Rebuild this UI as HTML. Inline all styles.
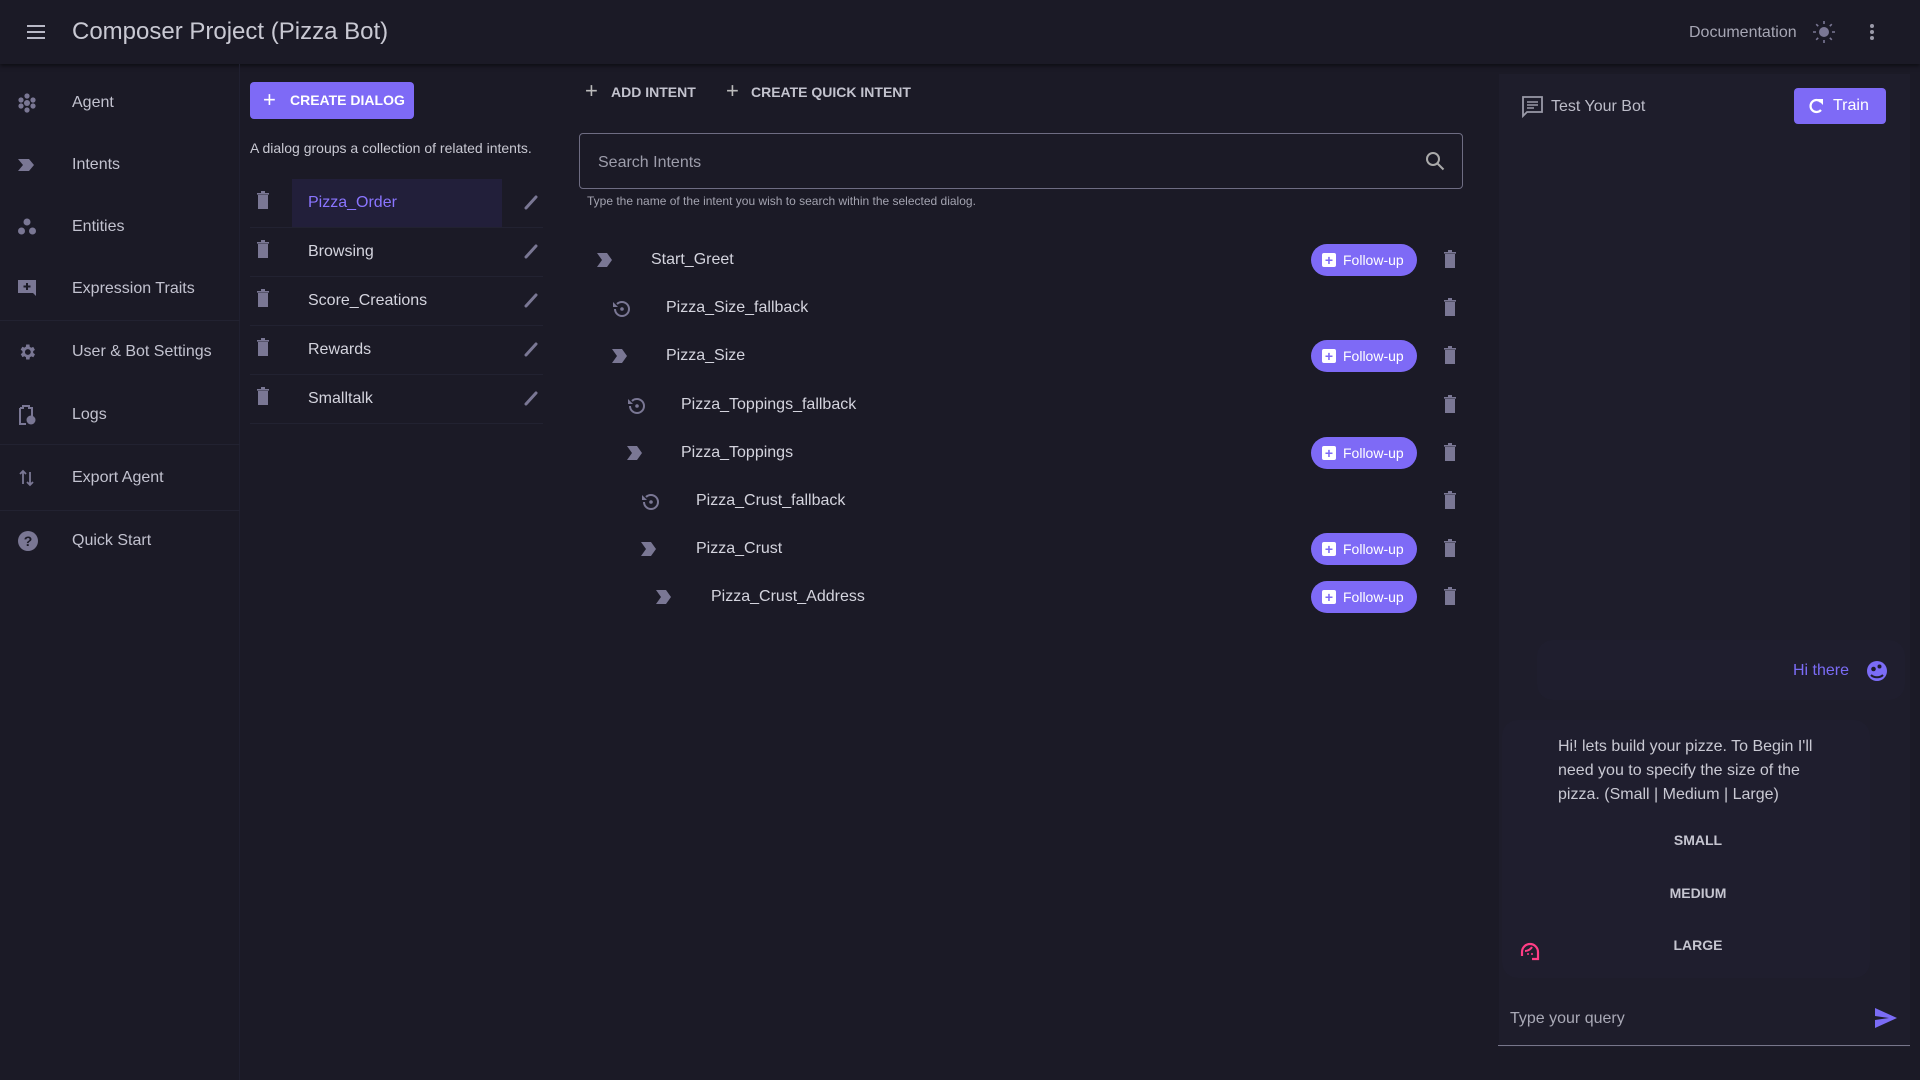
<!DOCTYPE html>
<html><head><meta charset="utf-8"><style>
*{box-sizing:border-box;margin:0;padding:0}
body{width:1920px;height:1080px;background:#1b1a26;font-family:"Liberation Sans",sans-serif;color:#cfcfd9;position:relative;overflow:hidden}
.a{position:absolute;white-space:nowrap}
.hdr{left:0;top:0;width:1920px;height:64px;background:#1b1a26;box-shadow:0 2px 4px rgba(0,0,0,.5)}
.side{left:0;top:64px;width:240px;height:1016px;border-right:1px solid #202030}
.ni{position:absolute;left:0;width:240px;height:62px}
.ni span{position:absolute;left:72px;top:50%;transform:translateY(-50%);font-size:16px;color:#c2c2cf;white-space:nowrap}
.ni svg{position:absolute;left:17px;top:50%;transform:translateY(-50%)}
.btn{background:#7e6af6;color:#fff;border-radius:4px;font-weight:bold;font-size:14px}
.dr{position:absolute;left:250px;width:293px;height:49px;border-bottom:1px solid #222231}
.dr span{position:absolute;left:58px;top:50%;transform:translateY(-50%);font-size:16px;color:#d4d4de}
.ir{position:absolute;left:580px;width:890px;height:40px}
.ir span{position:absolute;top:50%;transform:translateY(-50%);font-size:16px;color:#d4d4de}
.fu{position:absolute;left:731px;top:4px;width:106px;height:32px;border-radius:16px;background:#7e6af6;color:#fff;font-size:14px;line-height:32px;padding-left:32px}
.fu:before{content:"+";position:absolute;left:11px;top:9px;width:14px;height:14px;background:#fff;color:#7e6af6;border-radius:2px;font-size:14px;line-height:14px;text-align:center;font-weight:bold}
.mb{position:absolute;left:1519px;width:358px;text-align:center;font-weight:bold;font-size:14px;color:#c5c5d0}
</style></head><body>
<div class="a hdr">
 <svg class="a" style="left:24px;top:20px" width="24" height="24" viewBox="0 0 24 24"><path d="M3 6h18M3 12h18M3 18h18" stroke="#b8b8c6" stroke-width="2"/></svg>
 <div class="a" style="left:72px;top:18px;font-size:24px;color:#c9c9d3">Composer Project (Pizza Bot)</div>
 <div class="a" style="left:1689px;top:24px;font-size:16px;color:#a6a6b4">Documentation</div>
 <svg class="a" style="left:1812px;top:20px" width="24" height="24" viewBox="0 0 24 24"><circle cx="12" cy="12" r="5" fill="#7a7794"/><path d="M12 1v3M12 20v3M1 12h3M20 12h3M4.2 4.2l2 2M17.8 17.8l2 2M4.2 19.8l2-2M17.8 6.2l2-2" stroke="#7a7794" stroke-width="1.6"/></svg>
 <svg class="a" style="left:1860px;top:20px" width="24" height="24" viewBox="0 0 24 24"><circle cx="12" cy="6" r="2" fill="#9a9aa8"/><circle cx="12" cy="12" r="2" fill="#9a9aa8"/><circle cx="12" cy="18" r="2" fill="#9a9aa8"/></svg>
</div>
<div class="a side">
 <div class="ni" style="top:8px"><svg width="20" height="20" viewBox="0 0 20 20" fill="#7a7794"><circle cx="10" cy="10" r="3"/><circle cx="4" cy="7" r="2.6"/><circle cx="16" cy="7" r="2.6"/><circle cx="4" cy="13" r="2.6"/><circle cx="16" cy="13" r="2.6"/><circle cx="10" cy="3" r="2.6"/><circle cx="10" cy="17" r="2.6"/></svg><span>Agent</span></div>
 <div class="ni" style="top:70px"><svg width="20" height="20" viewBox="0 0 20 20"><path d="M1 4h11l5 6-5 6H1l5-6z" fill="#7a7794"/></svg><span>Intents</span></div>
 <div class="ni" style="top:132px"><svg width="20" height="20" viewBox="0 0 20 20" fill="#7a7794"><circle cx="10" cy="5" r="3.5"/><circle cx="4.5" cy="14" r="3.5"/><circle cx="15.5" cy="14" r="3.5"/></svg><span>Entities</span></div>
 <div class="ni" style="top:194px"><svg width="20" height="20" viewBox="0 0 20 20"><path d="M1 1h18v16l-3-3H1z" fill="#7a7794"/><path d="M10 4v7M6.5 7.5h7" stroke="#1b1a26" stroke-width="2"/></svg><span>Expression Traits</span></div>
 <div class="a" style="left:0;top:256px;width:240px;height:1px;background:#222231"></div>
 <div class="ni" style="top:257px"><svg width="20" height="20" viewBox="0 0 24 24"><path fill="#7a7794" d="M19.4 13a7.5 7.5 0 000-2l2.1-1.6-2-3.5-2.5 1a7 7 0 00-1.7-1L15 3h-4l-.4 2.7a7 7 0 00-1.7 1l-2.5-1-2 3.5L6.6 11a7.5 7.5 0 000 2l-2.1 1.6 2 3.5 2.5-1a7 7 0 001.7 1L11 21h4l.4-2.7a7 7 0 001.7-1l2.5 1 2-3.5zM13 15.5a3.5 3.5 0 110-7 3.5 3.5 0 010 7z"/></svg><span>User &amp; Bot Settings</span></div>
 <div class="ni" style="top:320px"><svg width="20" height="22" viewBox="0 0 20 22"><path d="M3 4h3V2h6v2h3v8M9 20H3V4" stroke="#7a7794" stroke-width="2" fill="none"/><circle cx="14" cy="16" r="4.5" fill="#7a7794"/></svg><span>Logs</span></div>
 <div class="a" style="left:0;top:380px;width:240px;height:1px;background:#222231"></div>
 <div class="ni" style="top:383px"><svg width="20" height="20" viewBox="0 0 20 20"><path d="M6 16V3M3 6l3-3 3 3M13 4v13M10 14l3 3 3-3" stroke="#7a7794" stroke-width="1.8" fill="none"/></svg><span>Export Agent</span></div>
 <div class="a" style="left:0;top:446px;width:240px;height:1px;background:#222231"></div>
 <div class="ni" style="top:446px"><svg width="22" height="22" viewBox="0 0 22 22"><circle cx="11" cy="11" r="10" fill="#7a7794"/><text x="11" y="16" text-anchor="middle" font-size="14" font-weight="bold" fill="#1b1a26" font-family="Liberation Sans">?</text></svg><span>Quick Start</span></div>
</div>
<div class="a btn" style="left:250px;top:82px;width:164px;height:37px;line-height:37px;padding-left:40px">CREATE DIALOG</div>
<div class="a" style="left:263px;top:89px;color:#fff;font-size:22px;line-height:22px">+</div>
<div class="a" style="left:250px;top:140px;font-size:14px;color:#c8c8d2">A dialog groups a collection of related intents.</div>
<div class="a" style="left:292px;top:179px;width:210px;height:48px;background:#221f3a"></div>
<div class="dr" style="top:179px"><span style="color:#8a75ff">Pizza_Order</span></div>
<div class="dr" style="top:228px"><span>Browsing</span></div>
<div class="dr" style="top:277px"><span>Score_Creations</span></div>
<div class="dr" style="top:326px"><span>Rewards</span></div>
<div class="dr" style="top:375px"><span>Smalltalk</span></div>
<svg class="a" style="left:0;top:0" width="560" height="430">
 <g fill="#7a7794">
 <path d="M258 195h10v14h-10zM257 193h12v1.6h-12zM261 191h4v2h-4z"/>
 <path d="M258 244h10v14h-10zM257 242h12v1.6h-12zM261 240h4v2h-4z"/>
 <path d="M258 293h10v14h-10zM257 291h12v1.6h-12zM261 289h4v2h-4z"/>
 <path d="M258 342h10v14h-10zM257 340h12v1.6h-12zM261 338h4v2h-4z"/>
 <path d="M258 391h10v14h-10zM257 389h12v1.6h-12zM261 387h4v2h-4z"/>
 </g>
 <g stroke="#7a7794" stroke-width="3" stroke-linecap="round">
 <path d="M526 208l10-11"/><path d="M526 257l10-11"/><path d="M526 306l10-11"/><path d="M526 355l10-11"/><path d="M526 404l10-11"/>
 </g>
</svg>
<div class="a" style="left:585px;top:80px;font-size:22px;color:#bbb;line-height:22px">+</div>
<div class="a" style="left:611px;top:84px;font-size:14px;font-weight:bold;color:#c3c3ce">ADD INTENT</div>
<div class="a" style="left:726px;top:80px;font-size:22px;color:#bbb;line-height:22px">+</div>
<div class="a" style="left:751px;top:84px;font-size:14px;font-weight:bold;color:#c3c3ce">CREATE QUICK INTENT</div>
<div class="a" style="left:579px;top:133px;width:884px;height:56px;border:1px solid #6e6c82;border-radius:4px"></div>
<div class="a" style="left:598px;top:154px;font-size:16px;color:#9d9dab">Search Intents</div>
<svg class="a" style="left:1424px;top:150px" width="22" height="22" viewBox="0 0 22 22"><circle cx="9" cy="9" r="6" stroke="#aaa" stroke-width="2" fill="none"/><path d="M13.5 13.5l6 6" stroke="#aaa" stroke-width="2"/></svg>
<div class="a" style="left:587px;top:194px;font-size:12px;color:#a3a3b0">Type the name of the intent you wish to search within the selected dialog.</div>
<div class="ir" style="top:240px"><svg class="a" style="left:16px;top:12px" width="20" height="16" viewBox="0 0 20 16"><path d="M1 1h10l5 7-5 7H1l5-7z" fill="#7a7794"/></svg><span style="left:71px">Start_Greet</span><div class="fu">Follow-up</div></div>
<div class="ir" style="top:288px"><svg class="a" style="left:31px;top:10px" width="22" height="22" viewBox="0 0 22 22"><path d="M4 11a7 7 0 107-7 7 7 0 00-5 2" stroke="#7a7794" stroke-width="2" fill="none"/><path d="M2 4v5h5" fill="#7a7794"/><circle cx="11" cy="11" r="1.8" fill="#7a7794"/></svg><span style="left:86px">Pizza_Size_fallback</span></div>
<div class="ir" style="top:336px"><svg class="a" style="left:31px;top:12px" width="20" height="16" viewBox="0 0 20 16"><path d="M1 1h10l5 7-5 7H1l5-7z" fill="#7a7794"/></svg><span style="left:86px">Pizza_Size</span><div class="fu">Follow-up</div></div>
<div class="ir" style="top:385px"><svg class="a" style="left:46px;top:10px" width="22" height="22" viewBox="0 0 22 22"><path d="M4 11a7 7 0 107-7 7 7 0 00-5 2" stroke="#7a7794" stroke-width="2" fill="none"/><path d="M2 4v5h5" fill="#7a7794"/><circle cx="11" cy="11" r="1.8" fill="#7a7794"/></svg><span style="left:101px">Pizza_Toppings_fallback</span></div>
<div class="ir" style="top:433px"><svg class="a" style="left:46px;top:12px" width="20" height="16" viewBox="0 0 20 16"><path d="M1 1h10l5 7-5 7H1l5-7z" fill="#7a7794"/></svg><span style="left:101px">Pizza_Toppings</span><div class="fu">Follow-up</div></div>
<div class="ir" style="top:481px"><svg class="a" style="left:60px;top:10px" width="22" height="22" viewBox="0 0 22 22"><path d="M4 11a7 7 0 107-7 7 7 0 00-5 2" stroke="#7a7794" stroke-width="2" fill="none"/><path d="M2 4v5h5" fill="#7a7794"/><circle cx="11" cy="11" r="1.8" fill="#7a7794"/></svg><span style="left:116px">Pizza_Crust_fallback</span></div>
<div class="ir" style="top:529px"><svg class="a" style="left:60px;top:12px" width="20" height="16" viewBox="0 0 20 16"><path d="M1 1h10l5 7-5 7H1l5-7z" fill="#7a7794"/></svg><span style="left:116px">Pizza_Crust</span><div class="fu">Follow-up</div></div>
<div class="ir" style="top:577px"><svg class="a" style="left:75px;top:12px" width="20" height="16" viewBox="0 0 20 16"><path d="M1 1h10l5 7-5 7H1l5-7z" fill="#7a7794"/></svg><span style="left:131px">Pizza_Crust_Address</span><div class="fu">Follow-up</div></div>
<svg class="a" style="left:1440px;top:242px" width="20" height="380" fill="#7a7794">
 <g id="t"><path d="M5 12h10v14H5zM4 10h12v1.6H4zM8 8h4v2H8z"/></g>
 <use href="#t" y="48"/><use href="#t" y="96"/><use href="#t" y="145"/><use href="#t" y="193"/><use href="#t" y="241"/><use href="#t" y="289"/><use href="#t" y="337"/>
</svg>
<div class="a" style="left:1499px;top:74px;width:411px;height:973px;background:#1e1d2b"></div>
<svg class="a" style="left:1522px;top:96px" width="22" height="22" viewBox="0 0 22 22"><path d="M1 1h19v15H5l-4 4z" stroke="#9a9aa8" stroke-width="1.8" fill="none"/><path d="M5 6h11M5 9h11M5 12h7" stroke="#9a9aa8" stroke-width="1.6"/></svg>
<div class="a" style="left:1551px;top:98px;font-size:16px;color:#bcbcc8">Test Your Bot</div>
<div class="a btn" style="left:1794px;top:88px;width:92px;height:36px;line-height:36px;padding-left:39px;font-size:16px;font-weight:normal">Train</div>
<svg class="a" style="left:1807px;top:97px" width="18" height="18" viewBox="0 0 18 18"><path d="M14 5a6 6 0 100 8" stroke="#fff" stroke-width="2.2" fill="none"/><path d="M10 2h6v6z" fill="#fff"/></svg>
<div class="a" style="left:1537px;top:640px;width:368px;height:60px;background:#1f1e2e;border-radius:16px"></div>
<div class="a" style="left:1793px;top:662px;font-size:16px;color:#7b6cf6">Hi there</div>
<svg class="a" style="left:1867px;top:661px" width="20" height="20" viewBox="0 0 20 20"><circle cx="10" cy="10" r="10" fill="#7b6cf6"/><circle cx="6.5" cy="8" r="2.3" fill="#1e1d2b"/><circle cx="12.5" cy="5.5" r="2" fill="#1e1d2b"/><path d="M4 14c3 3 9 3 12 0" stroke="#1e1d2b" stroke-width="2" fill="none"/></svg>
<div class="a" style="left:1502px;top:720px;width:368px;height:258px;background:#1f1e2e;border-radius:16px"></div>
<div class="a" style="left:1558px;top:735px;width:265px;white-space:normal;font-size:16px;line-height:24px;color:#c9c9d3">Hi! lets build your pizze. To Begin I'll need you to specify the size of the pizza. (Small | Medium | Large)</div>
<div class="mb" style="top:832px">SMALL</div>
<div class="mb" style="top:885px">MEDIUM</div>
<div class="mb" style="top:937px">LARGE</div>
<svg class="a" style="left:1519px;top:942px" width="22" height="22" viewBox="0 0 22 22"><path d="M3 14V10a8 8 0 0116 0v7h-6" stroke="#ff3d85" stroke-width="2.2" fill="none"/><path d="M6 9c3 0 6-2 7-4" stroke="#ff3d85" stroke-width="2" fill="none"/><circle cx="9" cy="12" r="1" fill="#ff3d85"/><circle cx="13" cy="12" r="1" fill="#ff3d85"/></svg>
<div class="a" style="left:1510px;top:1010px;font-size:16px;color:#a9a9b6">Type your query</div>
<svg class="a" style="left:1874px;top:1007px" width="24" height="22" viewBox="0 0 24 22"><path d="M1 1l22 10L1 21l0-8 14-2-14-2z" fill="#7b6cf6"/></svg>
<div class="a" style="left:1498px;top:1045px;width:412px;height:1px;background:#77768a"></div>
</body></html>
